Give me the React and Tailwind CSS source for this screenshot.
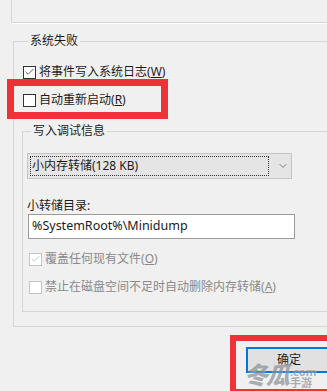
import { Check, ChevronDown } from "lucide-react";

const font = { fontFamily: '"Noto Sans", "Noto Sans CJK SC", sans-serif' };

function CheckBox({ checked, disabled }) {
  return (
    <span
      className={
        "flex h-[13px] w-[13px] shrink-0 items-center justify-center border bg-white " +
        (disabled ? "border-[#c4c4c4]" : "border-[#333]")
      }
    >
      {checked && (
        <Check
          size={12}
          strokeWidth={1.6}
          className={disabled ? "text-[#b8b8b8]" : "text-[#222]"}
        />
      )}
    </span>
  );
}

function CheckRow({ checked, disabled, label, hotkey, className }) {
  return (
    <div className={"flex h-[20px] items-center gap-[3px] " + (className || "")}>
      <CheckBox checked={checked} disabled={disabled} />
      <span
        className={
          "whitespace-nowrap text-[12px] leading-[20px] " +
          (disabled ? "text-[#8a8a8a]" : "text-[#1b1b1b]")
        }
      >
        {label}(<u>{hotkey}</u>)
      </span>
    </div>
  );
}

export default function App() {
  return (
    <div
      className="relative h-[391px] w-[327px] overflow-hidden bg-[#f0f0f0]"
      style={font}
    >
      {/* previous group, cut off */}
      <div className="ml-[11px] h-[23px] w-[400px] border-b border-l border-[#d6d6d6] shadow-[1px_1px_0_#fff]" />

      <fieldset className="ml-[13px] mt-[11px] w-[400px] border border-[#d6d6d6] pb-[14px] pl-[9px]">
        <legend className="ml-[5px] px-[2px] text-[12px] leading-[14px] text-[#1b1b1b]">
          系统失败
        </legend>
        <CheckRow checked label="将事件写入系统日志" hotkey="W" className="mt-[14px]" />
        <CheckRow label="自动重新启动" hotkey="R" className="mt-[8px]" />

        <fieldset className="-ml-px mt-[14px] w-[380px] border border-[#d6d6d6] pb-[14px] pl-[4px]">
          <legend className="ml-[4px] px-[2px] text-[12px] leading-[14px] text-[#1b1b1b]">
            写入调试信息
          </legend>

          <div className="mt-[15px] flex h-[26px] w-[265px] items-center border border-[#c4c4c4] bg-[#e5e5e5] p-[2px]">
            <div className="flex h-full w-[241px] items-center border border-dotted border-[#333] px-[1px] text-[12px] text-[#1b1b1b]">
              小内存转储(128 KB)
            </div>
            <ChevronDown size={12} strokeWidth={1.5} className="ml-[8px] text-[#555]" />
          </div>

          <div className="mt-[19px] text-[12px] leading-[16px] text-[#1b1b1b]">小转储目录:</div>
          <div className="ml-px flex h-[25px] w-[267px] items-center border border-[#9a9a9a] bg-white px-[3px] text-[12.5px] text-[#1b1b1b]">
            %SystemRoot%\Minidump
          </div>

          <div className="pl-[2px]">
            <CheckRow checked disabled label="覆盖任何现有文件" hotkey="O" className="mt-[10px]" />
            <CheckRow disabled label="禁止在磁盘空间不足时自动删除内存转储" hotkey="A" className="mt-[8px]" />
          </div>
        </fieldset>
      </fieldset>

      <button
        type="button"
        className="ml-[246px] mt-[20px] flex h-[26px] w-[86px] items-center justify-center border-2 border-[#0078d7] bg-[#e1e1e1] text-[12px] text-[#1b1b1b]"
      >
        确定
      </button>

      {/* red highlight boxes */}
      <div className="pointer-events-none absolute left-[7px] top-[79px] h-[40px] w-[161px] border-[7px] border-[#ee3338]" />
      <div className="pointer-events-none absolute left-[230px] top-[335px] h-[60px] w-[110px] border-[6px] border-[#ee3338]" />

      {/* watermark */}
      <div className="pointer-events-none absolute left-[244px] top-[362px] flex items-end opacity-70">
        <span className="text-[24px] font-black italic leading-[26px] tracking-[-2px] text-[#8a8f96] [text-shadow:0_0_2px_#fff]">
          冬瓜
        </span>
        <span className="ml-[2px] flex flex-col leading-none">
          <span className="text-[11px] font-bold text-[#8a8f96] [text-shadow:0_0_2px_#fff]">.com</span>
          <span className="text-[11px] font-bold text-[#8a8f96] [text-shadow:0_0_2px_#fff]">手游</span>
        </span>
      </div>
    </div>
  );
}
